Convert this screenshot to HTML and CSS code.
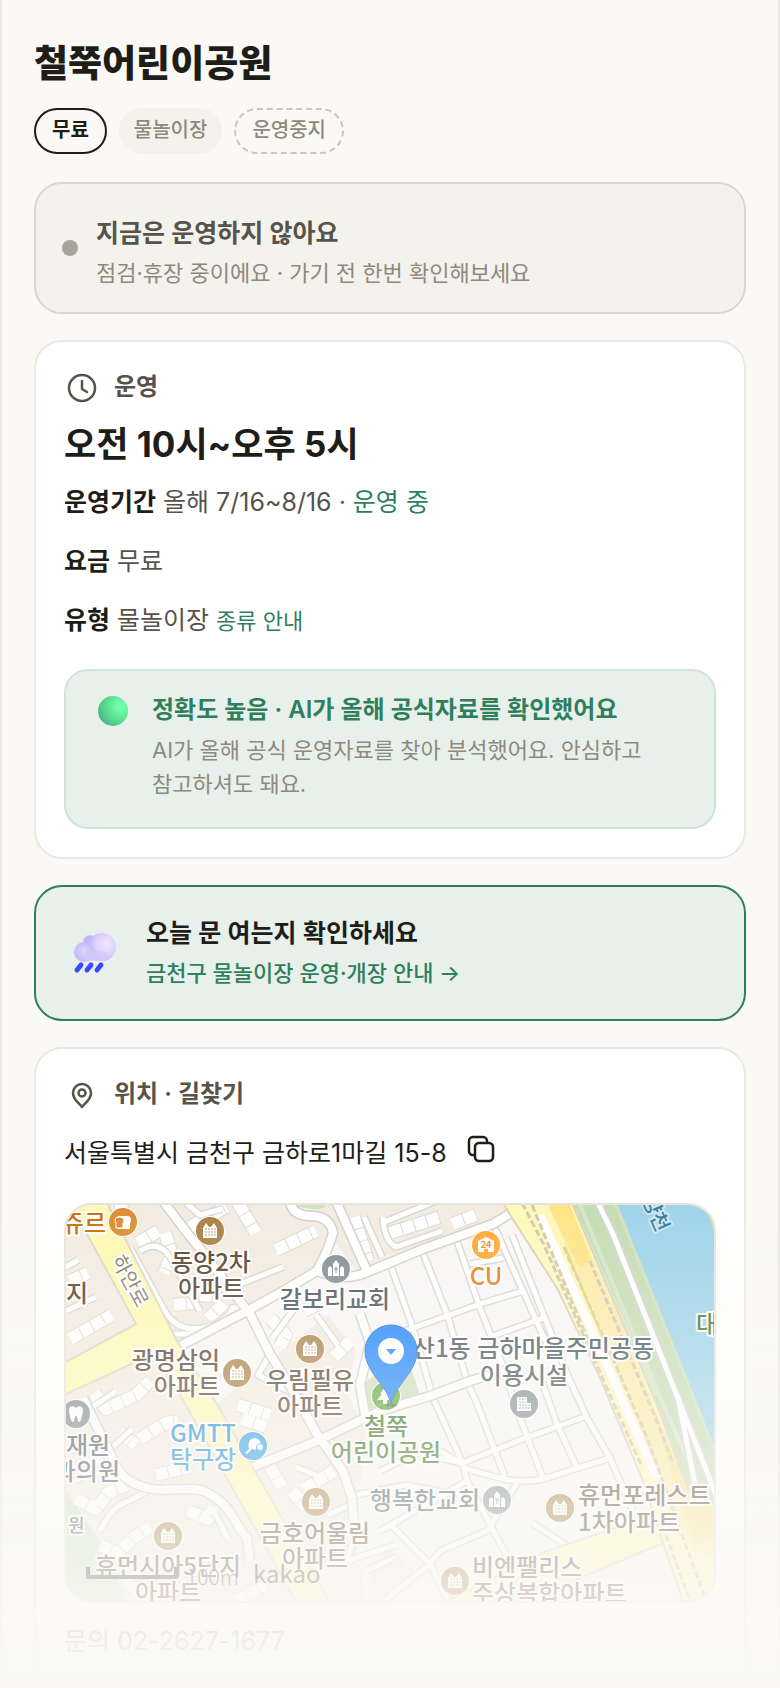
FILE: index.html
```
<!DOCTYPE html>
<html lang="ko">
<head>
    <meta charset="UTF-8">
    <meta name="viewport" content="width=device-width, initial-scale=1.0">
    <title>철쭉어린이공원</title>
    <link rel="stylesheet" href="styles.css">
</head>
<body>
    <main class="page">
        <h1>철쭉어린이공원</h1>
        <div class="tags">
            <span class="tag tag-free">무료</span>
            <span class="tag tag-type">물놀이장</span>
            <span class="tag tag-closed">운영중지</span>
        </div>

        <section class="status">
            <span class="status-dot"></span>
            <div class="status-body">
                <p class="status-title">지금은 운영하지 않아요</p>
                <p class="status-text">점검·휴장 중이에요 · 가기 전 한번 확인해보세요</p>
            </div>
        </section>

        <section class="card">
            <h2 class="card-head">
                <svg class="head-icon" viewBox="0 0 36 36"><circle cx="18" cy="18" r="13"/><path d="M18 11v8l5 3"/></svg>
                운영
            </h2>
            <p class="hours">오전 10시~오후 5시</p>
            <p class="row"><b>운영기간</b> 올해 7/16~8/16 <span class="open">· 운영 중</span></p>
            <p class="row"><b>요금</b> 무료</p>
            <p class="row"><b>유형</b> 물놀이장 <a href="#">종류 안내</a></p>
            <div class="trust">
                <span class="orb"></span>
                <div>
                    <p class="trust-title">정확도 높음 · AI가 올해 공식자료를 확인했어요</p>
                    <p class="trust-text">AI가 올해 공식 운영자료를 찾아 분석했어요. 안심하고 참고하셔도 돼요.</p>
                </div>
            </div>
        </section>

        <a class="notice" href="#">
            <svg class="rain" viewBox="0 0 48 48">
                <defs>
                    <radialGradient id="cloudBig" cx="0.65" cy="0.4" r="0.65">
                        <stop offset="0" stop-color="#f1e8fd"/><stop offset="0.6" stop-color="#dcd0fb"/><stop offset="1" stop-color="#c3b4f6"/>
                    </radialGradient>
                    <radialGradient id="cloudSmall" cx="0.5" cy="0.45" r="0.6">
                        <stop offset="0" stop-color="#dfd9fc"/><stop offset="1" stop-color="#bdb2f6"/>
                    </radialGradient>
                </defs>
                <circle cx="18" cy="13" r="7" fill="#c4b9f8"/>
                <path d="M12 21h24v10H12z" fill="#cbbff9"/>
                <circle cx="30" cy="18" r="14" fill="url(#cloudBig)"/>
                <circle cx="12" cy="23" r="10" fill="url(#cloudSmall)"/>
                <path d="M12 25q12-6 24-1l-2 8H13z" fill="#d3c8fb" opacity="0.8"/>
                <path class="drop" d="M9 36l-4 5M19 36l-4 5M29 36l-4 5"/>
            </svg>
            <div>
                <p class="notice-title">오늘 문 여는지 확인하세요</p>
                <p class="notice-text">금천구 물놀이장 운영·개장 안내 →</p>
            </div>
        </a>

        <section class="card">
            <h2 class="card-head">
                <svg class="head-icon" viewBox="0 0 36 36"><path d="M18 30c-2-3-9-7-9-14a9 9 0 0 1 18 0c0 7-7 11-9 14z"/><circle cx="18" cy="16" r="3.5"/></svg>
                위치 · 길찾기
            </h2>
            <div class="address">
                <span>서울특별시 금천구 금하로1마길 15-8</span>
                <button type="button" class="copy" aria-label="주소 복사">
                    <svg viewBox="0 0 28 28"><rect x="8" y="8" width="18" height="18" rx="4"/><path d="M6 20a4 4 0 0 1-4-4V6a4 4 0 0 1 4-4h10a4 4 0 0 1 4 4"/></svg>
                </button>
            </div>
            <div class="map">
                <svg viewBox="0 0 648 396" preserveAspectRatio="xMidYMid slice">
                    <defs>
                        <g id="roads">
                            <path d="M97 -4 122 29 144 56 164 83 184 109 204 149 227 186 251 229 277 266 286 293 289 330"/>
                            <path d="M112 142 181 106 217 86 251 66 Q280 78 304 66 L357 44 427 19 450 5"/>
                            <path d="M224 -4Q226 11 245 11T267 28Q262 46 251 66"/>
                            <path d="M17 193 51 263Q60 278 81 283C100 288 125 280 140 287Q158 296 167 312T181 333L184 356"/>
                            <path d="M184 263 251 236 314 206 364 191 404 176 447 163"/>
                            <path d="M270 -4 301 66M294 109 304 138 294 180 300 216"/>
                        </g>
                        <g id="lanes">
                            <path d="M64 43 97 103Q106 120 121 123T151 118 166 103L184 102M164 83 217 62M107 129H130M204 149 192 170 240 195M0 62 12 55M0 106 30 92"/>
                            <path d="M74 46Q92 34 104 52L134 106M228 104 206 134M250 110 272 140M34 326Q44 304 58 298T81 286M0 220 50 186M10 276 66 224"/>
                            <path d="M324 59 347 123 367 193 397 259M357 48 381 109 402 179 410 196 439 272M391 36 414 103 434 153 454 213 477 273"/>
                            <path d="M427 19 457 86 487 153M446 30 501 169 521 213 544 253 567 306M470 160 491 219 511 263"/>
                            <path d="M404 59 437 53M314 134 347 123 381 111 414 99 457 86M424 132 477 113"/>
                            <path d="M314 266 350 248 396 258 457 234 521 211M397 263 437 274Q460 278 477 274L544 253"/>
                            <path d="M451 278 421 326 374 346 364 359 314 399M314 326 401 276 397 259 370 244M324 319 364 359 384 399M466 318 504 343M401 276 442 353"/>
                            <path d="M316 52 298 12M120 -2 134 10 156 4M290 290 340 280 390 290M250 270 230 262M264 250 284 238M262 310 284 300M150 310 162 334"/>
                            <path d="M317 12Q318 36 330 42L376 26M316 18 370 -4M290 330 280 356 330 340M300 366 330 352"/>
                        </g>
                        <g id="houses">
                            <path d="M54 -2 62 20M72 38 92 26M99 28 106 50 98 68M124 22 160 2M172 -2 190 28M210 45 250 26M288 12 302 56"/>
                            <path d="M4 76 22 68M4 134 46 110M28 188 40 204 70 190 84 176M158 98 142 114M108 100 128 98M134 90 154 92"/>
                            <path d="M205 114 220 130 214 142M238 106 254 98M268 152 284 136M172 200 204 210M176 214 200 222M324 28 374 12M386 19 410 10"/>
                            <path d="M54 228 70 240M74 234 100 218 112 216M90 270 124 262M10 294 30 304 42 288 60 280M122 306 142 314 148 302M34 340 52 348 66 334 84 322"/>
                            <path d="M204 262 216 282M226 286 240 302M238 284 268 266M60 376 80 396M170 396 200 380"/>
                        </g>
                        <g id="apt">
                            <circle r="15" fill="#fff"/><circle r="14"/>
                            <path d="M-7-3-4-8-1-4H1L4-8 7-3V7H-7z" fill="#fff"/>
                            <path class="windows" d="M-5-2H6M-5 1H6M-5 4H6"/>
                        </g>
                        <g id="church">
                            <circle r="15" fill="#fff"/><circle r="14"/>
                            <path d="M-8 7v-8l2-2 2 2v8zM4 7v-8l2-2 2 2v8zM-3 7v-12l3-4 3 4v12z" fill="#fff"/>
                            <path d="M0-2v6M-2 0h4" stroke="#7d8a90"/>
                        </g>
                    </defs>

                    <!-- ground -->
                    <rect width="648" height="396" fill="#f8f7f6"/>
                    <path d="M0 0H440L446 10 357 44 301 68 251 66 181 106 121 139 151 199 210 150 262 110 290 146 282 190 300 226 289 330 300 396H0z" fill="#f3ebe0"/>
                    <path d="M110 141 181 106 204 149 160 163 140 180zM251 66 264 30 290 66z" fill="#f8f7f6"/>
                    <path d="M0 286 40 346 60 396H0z" fill="#cfe3be"/>
                    <path d="M224 0H260Q258 5 246 4z" fill="#cfe3be"/>
                    <path d="M298 178 340 148 354 190 296 214z" fill="#c9deb7"/>
                    <path d="M314 336 350 366 320 396H300z" fill="#f3ebe0"/>

                    <use href="#houses" class="house-line"/>
                    <use href="#houses" class="house"/>
                    <use href="#lanes" class="lane-line"/>
                    <use href="#lanes" class="lane"/>
                    <use href="#roads" class="road-line"/>
                    <use href="#roads" class="road"/>

                    <path class="avenue" d="M5 -2H41L111 136 151 199 264 398H231L112 186 87 149 -2 190V158L70 119 21 29z"/>
                    <path class="avenue" d="M377 398 481 346 561 319 600 300 610 338 597 338 514 373 454 398z"/>

                    <!-- river side -->
                    <path d="M504 0H552L650 240V330L622 286z" fill="#c3dbb1"/>
                    <path d="M514 0 600 206 642 300M506 0 590 190" fill="none" stroke="#d3e5c6" stroke-width="4"/>
                    <path d="M548 0H556L650 232V252z" fill="#cde0bc"/>
                    <path d="M552 0H648V240z" fill="#9bd2ea"/>
                    <path d="M639 0H648V29z" fill="#c3dbb1"/>
                    <path class="river-road-line" d="M532 -2 547 29 617 206 650 290M612 192 631 290"/>
                    <path class="river-road" d="M532 -2 547 29 617 206 650 290M612 192 631 290"/>
                    <path d="M437 -2H506L591 200 622 286 650 326V396H617L597 338 577 276 534 173 491 83 446 13z" fill="#fff8b8" stroke="#ddd0b4" stroke-width="2"/>
                    <path d="M482 0H504L560 130 622 286 650 326V350L626 346 590 262 530 110z" fill="#fdeba6"/>
                    <path d="M482 0H504L526 56 514 63z" fill="#ffe480"/>
                    <path d="M586 200 622 286 650 300V332L630 340 608 276z" fill="#fbe38a"/>
                    <path d="M474 10 514 99 561 206 591 273" fill="none" stroke="#fff" stroke-width="8"/>
                    <path class="rail" d="M456 -2 478 40 512 118 576 262M466 0 500 82 528 150M498 42 580 230 640 396M524 56 590 214 606 256M600 330 624 396"/>
                    <path d="M499 42 545 152" stroke="#ead26f" stroke-width="2"/>

                    <!-- places -->
                    <g class="place brown">
                        <text x="145" y="66" text-anchor="middle">동양2차</text>
                        <text x="145" y="92" text-anchor="middle">아파트</text>
                        <text x="0" y="97">지</text>
                        <text x="154" y="164" text-anchor="end">광명삼익</text>
                        <text x="154" y="190" text-anchor="end">아파트</text>
                        <text x="244" y="184" text-anchor="middle">우림필유</text>
                        <text x="244" y="210" text-anchor="middle">아파트</text>
                        <text x="249" y="337" text-anchor="middle">금호어울림</text>
                        <text x="249" y="362" text-anchor="middle">아파트</text>
                        <text x="102" y="370" text-anchor="middle">휴먼시아5단지</text>
                        <text x="102" y="396" text-anchor="middle">아파트</text>
                        <text x="512" y="299">휴먼포레스트</text>
                        <text x="512" y="326">1차아파트</text>
                        <text x="406" y="371">비엔팰리스</text>
                        <text x="406" y="397">주상복합아파트</text>
                    </g>
                    <g class="place slate">
                        <text x="269" y="103" text-anchor="middle">갈보리교회</text>
                        <text x="588" y="152" text-anchor="end">산1동 금하마을주민공동</text>
                        <text x="458" y="179" text-anchor="middle">이용시설</text>
                        <text x="0" y="249">재원</text>
                        <text x="54" y="275" text-anchor="end">과의원</text>
                        <text x="359" y="304" text-anchor="middle">행복한교회</text>
                        <text class="small" x="2" y="327">원</text>
                    </g>
                    <g class="place">
                        <text class="orange" x="40" y="27" text-anchor="end">쥬르</text>
                        <text class="cu" x="420" y="80" text-anchor="middle">CU</text>
                        <text class="sky" x="137" y="237" text-anchor="middle">GMTT</text>
                        <text class="sky" x="137" y="263" text-anchor="middle">탁구장</text>
                        <text class="park" x="320" y="230" text-anchor="middle">철쭉</text>
                        <text class="park" x="320" y="256" text-anchor="middle">어린이공원</text>
                        <text class="park-dark" x="630" y="128">대</text>
                        <text class="street" transform="translate(58 79) rotate(62)" text-anchor="middle">하안로</text>
                        <text class="water" transform="translate(591 28) rotate(66)" text-anchor="end">안양천</text>
                    </g>

                    <use href="#apt" x="144" y="26" class="apt"/>
                    <use href="#apt" x="171" y="168" class="apt"/>
                    <use href="#apt" x="244" y="144" class="apt"/>
                    <use href="#apt" x="250" y="297" class="apt"/>
                    <use href="#apt" x="102" y="331" class="apt"/>
                    <use href="#apt" x="494" y="303" class="apt"/>
                    <use href="#apt" x="389" y="376" class="apt"/>
                    <use href="#church" x="270" y="64" class="church"/>
                    <use href="#church" x="431" y="295" class="church"/>
                    <g transform="translate(57 17)">
                        <circle r="15" fill="#fff"/><circle r="14" fill="#da8a2c"/>
                        <path d="M-5-6H4Q8-6 8-2 8 0 7 1V7H-5Z" fill="#fff"/><path d="M-8-2Q-8-5-4-5T1-2Q1 0 0 1V6H-7V1Q-8 0-8-2z" fill="#da8a2c" stroke="#fff"/>
                    </g>
                    <g transform="translate(420 40)">
                        <circle r="15" fill="#fff"/><circle r="14" fill="#ffa62b"/>
                        <path d="M-8-4 0-8 8-4V7H2V4H-2V7H-8z" fill="#fff"/><text class="cu-hours" y="3" text-anchor="middle">24</text>
                    </g>
                    <g transform="translate(458 199)">
                        <circle r="15" fill="#fff"/><circle r="14" fill="#7f8a90"/>
                        <path d="M-7-7H3V-1H7V7H-7z" fill="#fff"/><path class="windows windows-grey" d="M-5-5H2M-5-2H2M-5 1H6M-5 4H6"/>
                    </g>
                    <g transform="translate(10 209)">
                        <circle r="15" fill="#fff"/><circle r="14" fill="#76828a"/>
                        <path d="M-7-4C-7-9-2-8 0-6 2-8 7-9 7-4 7 0 5 8 3 8 1 8 2 2 0 2S-1 8-3 8C-5 8-7 0-7-4z" fill="#fff"/>
                    </g>
                    <g transform="translate(187 241)">
                        <circle r="15" fill="#fff"/><circle r="14" fill="#2198e3"/>
                        <path d="M-8 7-4 3C-6-3-3-8 2-8 6-8 8-4 8-1Q3-1 3 4L-1 3-6 8z" fill="#fff"/><circle cx="7" cy="1" r="3.5" fill="#fff" stroke="#2198e3"/>
                    </g>
                    <g transform="translate(320 191)">
                        <circle r="15" fill="#fff"/><circle r="14" fill="#58a32f"/>
                        <path d="M-1-9 5-2H3L7 4H1V8H-3V4H-9L-4-2H-6z" fill="#fff"/>
                    </g>

                    <!-- marker -->
                    <ellipse cx="325" cy="200" rx="6" ry="2" fill="#456" opacity="0.6"/>
                    <path d="M325 199C321 180 299 167 299 146A26 26 0 0 1 351 146C351 167 329 180 325 199z" fill="#1481fc" stroke="#1264c4"/>
                    <circle cx="325" cy="146" r="13" fill="#fff"/>
                    <path d="M320 144H330L325 150z" fill="#1481fc"/>

                    <path d="M22 362V372H110V362" fill="none" stroke="#333" stroke-width="4"/>
                    <text class="scale" x="120" y="380">100m</text>
                    <text class="kakao" x="187" y="378">kakao</text>
                </svg>
            </div>
            <p class="contact">문의 02-2627-1677</p>
        </section>
    </main>
    <div class="fade"></div>
</body>
</html>
```
FILE: styles.css
```
* {
    margin: 0;
    padding: 0;
    box-sizing: border-box;
}

body {
    height: 100vh;
    overflow: hidden;
    background: #faf9f5;
    color: #1f1d18;
    font-family: Inter, "Noto Sans CJK KR", sans-serif;
    font-size: 25px;
    word-break: keep-all;
}

a {
    color: #2f7f5c;
    text-decoration: none;
}

.page {
    min-height: 100vh;
    padding: 32px;
    border-left: 2px solid #eae8e0;
    border-right: 2px solid #eae8e0;
    display: flex;
    flex-direction: column;
    gap: 26px;
}

h1 {
    font-size: 37px;
    line-height: 64px;
    font-weight: 800;
}

.tags {
    display: flex;
    gap: 12px;
    margin: -14px 0 2px;
}

.tag {
    height: 46px;
    padding: 0 16px;
    border-radius: 23px;
    font-size: 20px;
    line-height: 40px;
    font-weight: 500;
    color: #8f897c;
}

.tag-free {
    border: 2px solid #1f1d18;
    color: #1f1d18;
    font-weight: 600;
}

.tag-type {
    padding: 0 15px;
    background: #f3f2ec;
    line-height: 44px;
}

.tag-closed {
    border: 2px dashed #c9c6ba;
}

.status {
    display: flex;
    align-items: center;
    gap: 18px;
    min-height: 132px;
    padding: 18px 26px;
    background: #f3f2ec;
    border: 2px solid #d9d8d0;
    border-radius: 28px;
}

.status-dot {
    width: 16px;
    height: 16px;
    border-radius: 50%;
    background: #a8a497;
}

.status-body {
    padding-top: 10px;
}

.status-title {
    font-size: 25px;
    line-height: 40px;
    font-weight: 600;
    color: #57534a;
}

.status-text {
    font-size: 22px;
    line-height: 40px;
    color: #8f897c;
}

.card {
    padding: 28px;
    background: #fff;
    border: 2px solid #eae8e0;
    border-radius: 28px;
}

.card-head {
    display: flex;
    align-items: flex-start;
    gap: 14px;
    font-size: 24px;
    line-height: 34px;
    font-weight: 600;
    color: #57534a;
}

.head-icon {
    width: 36px;
    height: 36px;
    fill: none;
    stroke: #57534a;
    stroke-width: 2.5;
    stroke-linecap: round;
    stroke-linejoin: round;
}

.hours {
    margin: 12px 0;
    font-size: 35px;
    line-height: 52px;
    font-weight: 700;
}

.row {
    line-height: 40px;
    margin-bottom: 19px;
    color: #57534a;
}

.row b {
    color: #1f1d18;
    font-weight: 600;
}

.row .open {
    color: #2f7f5c;
}

.row a {
    font-size: 22px;
}

.trust {
    display: flex;
    gap: 24px;
    min-height: 160px;
    margin-top: 28px;
    padding: 18px 32px;
    background: #e8f0eb;
    border: 2px solid #cfe3d8;
    border-radius: 24px;
}

.orb {
    flex: none;
    width: 30px;
    height: 30px;
    margin-top: 7px;
    border-radius: 50%;
    background: radial-gradient(circle at 75% 35%, #72ffa6 10%, #58db90 50%, #47b083 85%, #5a9a98);
}

.trust-title {
    font-size: 24px;
    line-height: 42px;
    font-weight: 600;
    color: #2f7f5c;
}

.trust-text {
    font-size: 22px;
    line-height: 34px;
    margin-top: 2px;
    color: #8f897c;
}

.notice {
    display: flex;
    align-items: center;
    gap: 26px;
    min-height: 136px;
    padding: 26px 36px;
    background: #e8f0eb;
    border: 2px solid #2f7f5c;
    border-radius: 28px;
}

.rain {
    width: 48px;
    height: 48px;
}

.rain .drop {
    fill: none;
    stroke: #3d47ff;
    stroke-width: 5;
    stroke-linecap: round;
}

.notice-title {
    font-size: 25px;
    line-height: 40px;
    font-weight: 600;
    color: #1f1d18;
}

.notice-text {
    font-size: 22px;
    line-height: 40px;
    font-weight: 500;
}

.address {
    display: flex;
    align-items: center;
    gap: 20px;
    line-height: 40px;
    margin: 20px 0 30px;
}

.copy {
    width: 28px;
    height: 28px;
    margin-bottom: 8px;
    border: none;
    background: none;
    cursor: pointer;
}

.copy svg {
    display: block;
    fill: none;
    stroke: #1f1d18;
    stroke-width: 2.5;
    stroke-linecap: round;
}

.map {
    height: 400px;
    border: 2px solid #e6e4da;
    border-radius: 28px;
    overflow: hidden;
}

.map svg {
    display: block;
    width: 100%;
    height: 100%;
    font-family: "Noto Sans CJK KR", sans-serif;
}

.road-line, .road, .lane-line, .lane, .house-line, .house, .rail {
    fill: none;
    stroke-linejoin: round;
}

.road-line { stroke: #d0cecc; stroke-width: 11; }
.road { stroke: #fff; stroke-width: 8; }
.lane-line { stroke: #d8d6d4; stroke-width: 8; }
.lane { stroke: #fff; stroke-width: 5; }
.house-line { stroke: #dcd6ce; stroke-width: 14; }
.house { stroke: #fff; stroke-width: 12; stroke-dasharray: 12 1; }
.rail { stroke: #cfc6ae; stroke-width: 3; stroke-dasharray: 7 3; }
.avenue { fill: #fff9b0; stroke: #dcd6c6; stroke-width: 2; }
.river-road-line { fill: none; stroke: #d3d3cc; stroke-width: 9; }
.river-road { fill: none; stroke: #fff; stroke-width: 5; }

.place text {
    font-size: 24px;
    font-weight: 500;
    paint-order: stroke;
    stroke: #fff;
    stroke-width: 4px;
    stroke-linejoin: round;
}

.place .small { font-size: 18px; }
.brown { fill: #4f3826; }
.slate { fill: #3f4e56; }
.orange { fill: #c96a00; }
.cu { fill: #e27a15; }
.sky { fill: #1387cc; }
.park { fill: #2d6a0e; }
.park-dark { fill: #3f6f22; }
.place .street { fill: #77736c; font-size: 20px; font-weight: 400; }
.place .water { fill: #2e7698; stroke: #c8e6f3; font-size: 20px; }

.apt { fill: #a67b3e; }
.church { fill: #7d8a90; }

.windows {
    fill: none;
    stroke: #b9935f;
    stroke-width: 1;
    stroke-dasharray: 2 1;
}

.windows-grey {
    stroke: #7f8a90;
}

.cu-hours {
    fill: #e8860f;
    font-size: 9px;
    font-weight: 700;
}

.scale {
    fill: #333;
    font-size: 21px;
    font-weight: 300;
}

.kakao {
    fill: #333;
    font-size: 24px;
}

.contact {
    line-height: 40px;
    margin-top: 18px;
    color: #8f897c;
}

.fade {
    position: fixed;
    left: 0;
    right: 0;
    bottom: 0;
    height: 30vh;
    background: linear-gradient(rgba(250, 249, 245, 0), #faf9f5);
    pointer-events: none;
}
```
